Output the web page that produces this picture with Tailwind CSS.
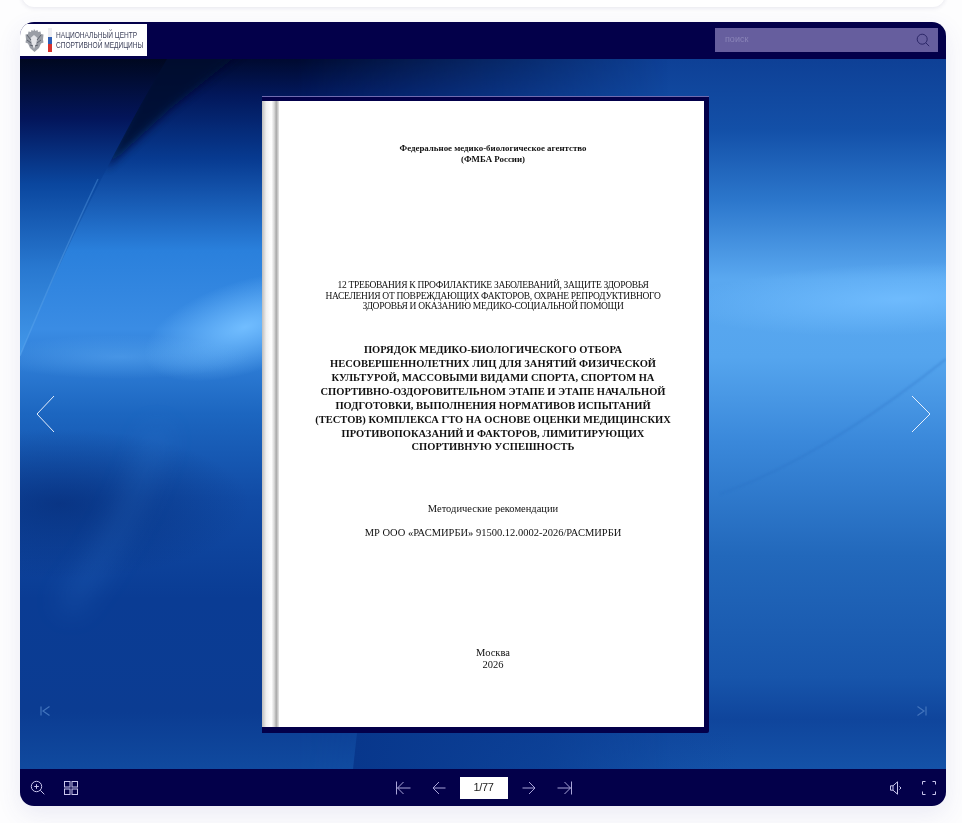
<!DOCTYPE html>
<html lang="ru">
<head>
<meta charset="utf-8">
<title>Flipbook</title>
<script src="https://cdn.jsdelivr.net/npm/@tailwindcss/browser@4"></script>
</head>
<body class="bg-[#fdfdfe] font-['Liberation_Sans',sans-serif]">
<div class="relative h-[823px] w-[962px] overflow-hidden">
  <div class="absolute left-[22px] top-[-20px] h-[27px] w-[923px] rounded-b-xl bg-white shadow-[0_1px_4px_rgba(60,60,110,0.12)]"></div>
  <div class="absolute left-[20px] top-[22px] flex h-[784px] w-[926px] flex-col overflow-hidden rounded-[14px] bg-[#03004a] shadow-[0_8px_24px_rgba(70,70,160,0.10)]">
    <header class="flex h-[37px] shrink-0 items-start justify-between pt-[2px] pr-[8px]">
      <div class="flex h-[32px] w-[127px] items-center bg-white pl-[4px]">
        <svg class="h-[25px] w-[20px] shrink-0 blur-[0.4px]" viewBox="0 0 20 25" aria-hidden="true">
          <path d="M10 1l1.500 2 2-1 .5 2 2.500-.5 .5 2.500 2.500 .5-.5 5 .5 3-2.500 1-2 4.500-4.500 4-4.500-4-2-4.500-2.500-1 .5-3-.5-5 2.500-.5 .5-2.500 2.500 .5 .5-2 2 1z" fill="#9a9ea6"/>
          <path d="M10 7l3.500 3-1.500 6-2 5-2-5-1.500-6z" fill="#e4e5e9"/>
          <path d="M3 7l4 5M17 7l-4 5M3 12l4 3M17 12l-4 3M6 17l3 1M14 17l-3 1" stroke="#5d626d" stroke-width="1" fill="none"/>
        </svg>
        <svg class="ml-[4px] h-[24px] w-[4px] shrink-0 blur-[0.3px]" viewBox="0 0 4 24" aria-hidden="true">
          <rect x="0" y="0" width="4" height="9" fill="#ededf1"/>
          <rect x="0" y="9" width="4" height="7" fill="#2f5fb5"/>
          <rect x="0" y="16" width="4" height="8" fill="#d8322e"/>
        </svg>
        <div class="ml-[4px] origin-left scale-x-[0.73] whitespace-nowrap text-[9px] leading-[10px] text-[#3f435c] blur-[0.3px]">НАЦИОНАЛЬНЫЙ ЦЕНТР<br>СПОРТИВНОЙ МЕДИЦИНЫ</div>
      </div>
      <div class="mt-[4px] flex h-[24px] w-[223px] items-center justify-between bg-[#665e9e] pl-[10px] pr-[8px]">
        <span class="text-[9px] text-[#8a84b8] blur-[0.3px]">поиск</span>
        <svg class="h-[14px] w-[14px]" viewBox="0 0 14 14" fill="none" stroke="#2c2768" stroke-width="1" aria-hidden="true">
          <circle cx="6.200" cy="6.200" r="5"/><path d="M9.800 9.800l3.400 3.400"/>
        </svg>
      </div>
    </header>

    <main class="relative flex-1 overflow-hidden bg-[#0c3f95]">
      <svg class="absolute inset-0 h-full w-full" viewBox="0 0 926 710" preserveAspectRatio="none" aria-hidden="true">
        <defs>
          <linearGradient id="right" x1="0" y1="0" x2="0" y2="1">
            <stop offset="0" stop-color="#0e4096"/>
            <stop offset="0.1" stop-color="#1350a8"/>
            <stop offset="0.2" stop-color="#2c77cc"/>
            <stop offset="0.31" stop-color="#5aa8f0"/>
            <stop offset="0.42" stop-color="#55a5ee"/>
            <stop offset="0.54" stop-color="#3a88da"/>
            <stop offset="0.7" stop-color="#2268bb"/>
            <stop offset="0.87" stop-color="#1755ab"/>
            <stop offset="0.93" stop-color="#0f459c"/>
            <stop offset="1" stop-color="#1452a8"/>
          </linearGradient>
          <linearGradient id="left" x1="0" y1="0" x2="0" y2="1">
            <stop offset="0" stop-color="#000a30"/>
            <stop offset="0.05" stop-color="#02175a"/>
            <stop offset="0.14" stop-color="#073a90"/>
            <stop offset="0.27" stop-color="#2a80dc"/>
            <stop offset="0.38" stop-color="#3a8ce4"/>
            <stop offset="0.5" stop-color="#1c66c0"/>
            <stop offset="0.62" stop-color="#114ba5"/>
            <stop offset="0.76" stop-color="#0a3c94"/>
            <stop offset="0.92" stop-color="#0b3c92"/>
            <stop offset="1" stop-color="#104a9f"/>
          </linearGradient>
          <linearGradient id="wedge" x1="0" y1="0" x2="0" y2="1">
            <stop offset="0" stop-color="#000820"/>
            <stop offset="0.2" stop-color="#03155a"/>
            <stop offset="0.42" stop-color="#0a469e"/>
            <stop offset="0.7" stop-color="#2878d0"/>
            <stop offset="1" stop-color="#4398ea"/>
          </linearGradient>
          <linearGradient id="fade" x1="0" y1="0" x2="1" y2="0">
            <stop offset="0.3" stop-color="#fff"/>
            <stop offset="0.7" stop-color="#000"/>
          </linearGradient>
          <linearGradient id="under" x1="0" y1="0" x2="1" y2="0">
            <stop offset="0" stop-color="#08378c"/>
            <stop offset="0.5" stop-color="#0a3c92" stop-opacity="0.7"/>
            <stop offset="1" stop-color="#0f459c" stop-opacity="0"/>
          </linearGradient>
          <mask id="leftMask"><rect width="926" height="710" fill="url(#fade)"/></mask>
          <radialGradient id="spot" cx="0.5" cy="0.5" r="0.5">
            <stop offset="0" stop-color="#71bdff"/>
            <stop offset="1" stop-color="#71bdff" stop-opacity="0"/>
          </radialGradient>
          <radialGradient id="shade" cx="0.5" cy="0.5" r="0.5">
            <stop offset="0" stop-color="#042770"/>
            <stop offset="1" stop-color="#042770" stop-opacity="0"/>
          </radialGradient>
          <filter id="b14" x="-50%" y="-30%" width="200%" height="160%"><feGaussianBlur stdDeviation="14"/></filter>
          <filter id="b4" x="-30%" y="-30%" width="160%" height="160%"><feGaussianBlur stdDeviation="4"/></filter>
          <filter id="b1" x="-10%" y="-30%" width="120%" height="160%"><feGaussianBlur stdDeviation="1"/></filter>
        </defs>
        <rect width="926" height="710" fill="url(#right)"/>
        <rect width="926" height="710" fill="url(#left)" mask="url(#leftMask)"/>
        <ellipse cx="225" cy="268" rx="105" ry="46" fill="url(#spot)" transform="rotate(-18 225 268)"/>
        <ellipse cx="100" cy="298" rx="130" ry="22" fill="url(#spot)" opacity="0.35"/>
        <ellipse cx="40" cy="445" rx="190" ry="75" fill="url(#shade)" opacity="0.6"/>
        <ellipse cx="880" cy="240" rx="220" ry="36" fill="url(#spot)" opacity="0.9" transform="rotate(-2 880 240)"/>
        <path d="M140 370Q110 470 45 550" stroke="#3d8ade" stroke-width="20" fill="none" opacity="0.2" filter="url(#b14)"/>
        <polygon points="140,-10 225,-10 150,50 85,110" fill="#000a2e" opacity="0.85" filter="url(#b4)"/>
        <path d="M147 0Q70 130 0 297L0 0Z" fill="url(#wedge)"/>
        <path d="M78 120Q40 200 0 297" stroke="#6db4f5" stroke-width="1.500" fill="none" opacity="0.3"/>
        <path d="M700 435Q800 400 926 300" stroke="#2a70c4" stroke-width="2" fill="none" opacity="0.35" filter="url(#b1)"/>
        <polygon points="337,674 720,674 720,710 333,710" fill="url(#under)"/>
      </svg>

      <button class="absolute left-[16px] top-[336px] h-[38px] w-[20px]" aria-label="Назад">
        <svg class="h-full w-full" viewBox="0 0 20 38" fill="none" stroke="#e6effc" stroke-width="1"><path d="M18 1L1 19l17 18"/></svg>
      </button>
      <button class="absolute right-[15px] top-[336px] h-[38px] w-[20px]" aria-label="Вперёд">
        <svg class="h-full w-full" viewBox="0 0 20 38" fill="none" stroke="#e6effc" stroke-width="1"><path d="M1 1l18 18L1 37"/></svg>
      </button>
      <svg class="absolute left-[20px] top-[647px] h-[10px] w-[10px]" viewBox="0 0 10 10" fill="none" stroke="#4274bd" stroke-width="1.200" aria-hidden="true"><path d="M1 0.500v9M9.500 0.500L3 5l6.500 4.500"/></svg>
      <svg class="absolute right-[19px] top-[647px] h-[10px] w-[10px]" viewBox="0 0 10 10" fill="none" stroke="#4274bd" stroke-width="1.200" aria-hidden="true"><path d="M9 0.500v9M0.500 0.500L7 5l-6.500 4.500"/></svg>

      <article class="absolute left-[242px] top-[37px] h-[637px] w-[447px] rounded-br-[2px] border-t border-t-[#6f6bb0] bg-[#03004a] pt-[4px] pr-[5px] pb-[6px]">
        <div class="relative h-full w-full overflow-hidden bg-white font-['Liberation_Serif',serif] text-center text-[#111]">
          <div class="absolute inset-y-0 left-0 w-[17px] bg-[linear-gradient(90deg,#bdbdbd_0,#f0f0f0_25%,#ffffff_55%,#d8d8d8_72%,#a8a8a8_84%,#e8e8e8_100%)]"></div>
          <div class="h-full pl-[20px] blur-[0.35px]">
            <p class="pt-[42px] text-[8.9px] font-bold leading-[11px]">Федеральное медико-биологическое агентство<br>(ФМБА России)</p>
            <p class="mt-[115px] text-[9.500px] leading-[10.700px] tracking-[-0.3px]">12 ТРЕБОВАНИЯ К ПРОФИЛАКТИКЕ ЗАБОЛЕВАНИЙ, ЗАЩИТЕ ЗДОРОВЬЯ<br>НАСЕЛЕНИЯ ОТ ПОВРЕЖДАЮЩИХ ФАКТОРОВ, ОХРАНЕ РЕПРОДУКТИВНОГО<br>ЗДОРОВЬЯ И ОКАЗАНИЮ МЕДИКО-СОЦИАЛЬНОЙ ПОМОЩИ</p>
            <p class="mt-[31px] text-[10.500px] font-bold leading-[13.900px]">ПОРЯДОК МЕДИКО-БИОЛОГИЧЕСКОГО ОТБОРА<br>НЕСОВЕРШЕННОЛЕТНИХ ЛИЦ ДЛЯ ЗАНЯТИЙ ФИЗИЧЕСКОЙ<br>КУЛЬТУРОЙ, МАССОВЫМИ ВИДАМИ СПОРТА, СПОРТОМ НА<br>СПОРТИВНО-ОЗДОРОВИТЕЛЬНОМ ЭТАПЕ И ЭТАПЕ НАЧАЛЬНОЙ<br>ПОДГОТОВКИ, ВЫПОЛНЕНИЯ НОРМАТИВОВ ИСПЫТАНИЙ<br>(ТЕСТОВ) КОМПЛЕКСА ГТО НА ОСНОВЕ ОЦЕНКИ МЕДИЦИНСКИХ<br>ПРОТИВОПОКАЗАНИЙ И ФАКТОРОВ, ЛИМИТИРУЮЩИХ<br>СПОРТИВНУЮ УСПЕШНОСТЬ</p>
            <p class="mt-[49px] text-[10.500px] leading-[12px]">Методические рекомендации</p>
            <p class="mt-[12px] text-[10.500px] leading-[12px]">МР ООО «РАСМИРБИ» 91500.12.0002-2026/РАСМИРБИ</p>
            <p class="mt-[108px] text-[10.500px] leading-[12px]">Москва<br>2026</p>
          </div>
        </div>
      </article>
    </main>

    <footer class="grid h-[37px] shrink-0 grid-cols-[1fr_auto_1fr] items-center px-[10px] text-[#a9a5d8]">
      <div class="flex items-center gap-[19px] text-[#c9c6ec]">
        <svg class="h-[15px] w-[15px]" viewBox="0 0 15 15" fill="none" stroke="currentColor" stroke-width="1" aria-hidden="true"><circle cx="6.500" cy="6.500" r="5.200"/><path d="M10.300 10.300l4 4M6.500 4.200v4.600M4.200 6.500h4.600"/></svg>
        <svg class="h-[14px] w-[14px]" viewBox="0 0 14 14" fill="none" stroke="currentColor" stroke-width="1" aria-hidden="true"><rect x="0.500" y="0.500" width="5.500" height="5.500"/><rect x="8" y="0.500" width="5.500" height="5.500"/><rect x="0.500" y="8" width="5.500" height="5.500"/><rect x="8" y="8" width="5.500" height="5.500"/></svg>
      </div>
      <div class="ml-[1px] flex items-center">
        <svg class="h-[14px] w-[15px]" viewBox="0 0 15 14" fill="none" stroke="currentColor" stroke-width="1" aria-hidden="true"><path d="M0.500 0.500v13M14.500 7H1.500M7.500 1L1.500 7l6 6"/></svg>
        <svg class="ml-[21px] h-[14px] w-[14px]" viewBox="0 0 14 14" fill="none" stroke="currentColor" stroke-width="1" aria-hidden="true"><path d="M13.500 7H1M7 1L1 7l6 6"/></svg>
        <div class="ml-[14px] flex h-[22px] w-[48px] items-center justify-center bg-white text-[11px] tracking-[-0.3px] text-[#222] blur-[0.25px]">1/77</div>
        <svg class="ml-[14px] h-[14px] w-[14px]" viewBox="0 0 14 14" fill="none" stroke="currentColor" stroke-width="1" aria-hidden="true"><path d="M0.500 7H13M7 1l6 6-6 6"/></svg>
        <svg class="ml-[21px] h-[14px] w-[15px]" viewBox="0 0 15 14" fill="none" stroke="currentColor" stroke-width="1" aria-hidden="true"><path d="M14.500 0.500v13M0.500 7h13M7.500 1l6 6-6 6"/></svg>
      </div>
      <div class="flex items-center justify-end gap-[20px] text-[#c9c6ec]">
        <svg class="h-[14px] w-[12px]" viewBox="0 0 12 14" fill="none" stroke="currentColor" stroke-width="1" aria-hidden="true"><path d="M0.500 4.800h2.500v4.400H0.500zM3 4.800L7.500 0.800v12.400L3 9.200M9.500 5.500L11 7 9.500 8.500"/></svg>
        <svg class="h-[14px] w-[14px]" viewBox="0 0 14 14" fill="none" stroke="currentColor" stroke-width="1" aria-hidden="true"><path d="M0.500 3.500V0.500H3.500M10.500 0.500h3v3M13.500 10.500v3h-3M3.500 13.500H0.500v-3"/></svg>
      </div>
    </footer>
  </div>
</div>
</body>
</html>
